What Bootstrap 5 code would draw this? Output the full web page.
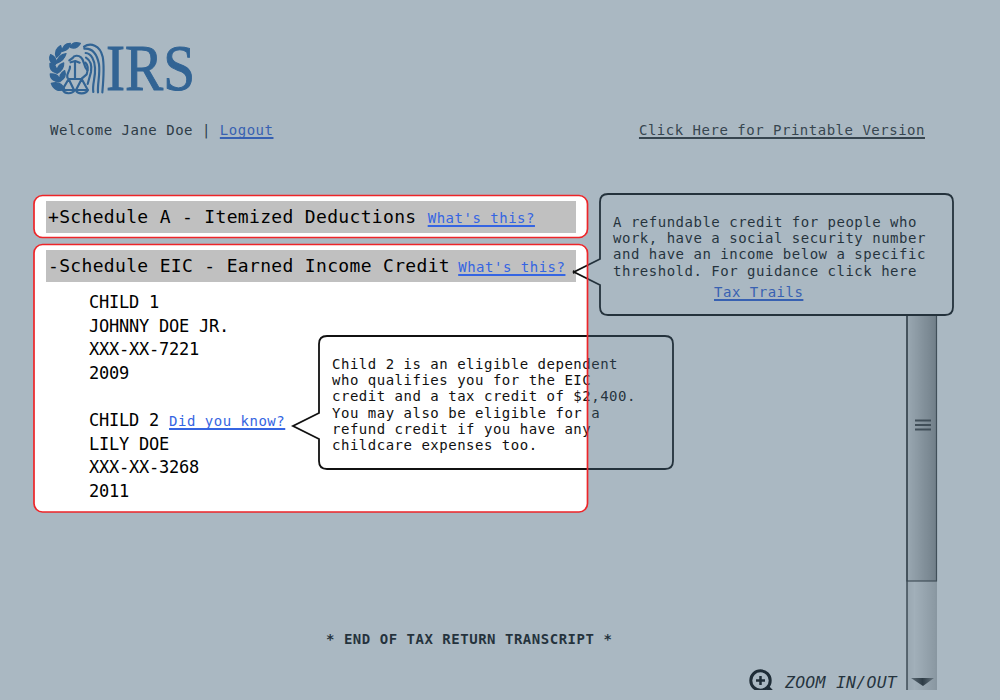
<!DOCTYPE html>
<html lang="en">
<head>
<meta charset="utf-8">
<meta name="viewport" content="width=device-width, initial-scale=1">
<title>IRS Tax Return Transcript</title>
<link href="https://cdn.jsdelivr.net/npm/bootstrap@5.3.0/dist/css/bootstrap.min.css" rel="stylesheet">
<style>
  body { width: 1000px; height: 700px; font: 14px/16px "DejaVu Sans Mono", monospace; color: #111; background: #fff; letter-spacing: .51px; }
  .shell { height: 690px; }
  a { color: #3565e2; text-decoration-thickness: 1.5px; text-underline-offset: 2px; text-decoration-skip-ink: none; }
  a:hover { color: #1d46b5; }
  .topbar { padding: 122px 75px 0 50px; color: #222; }
  .topbar .print-link { color: #333; }
  .brand-mark { left: 40px; top: 30px; }
  .schedules { padding: 63px 0 0 46px; width: 576px; }
  .sched-head { background: #c0c0c0; height: 32px; padding-left: 2px; font-size: 18px; line-height: 31px; letter-spacing: .33px; white-space: pre; color: #000; }
  .sched-head + .sched-head { margin-top: 17px; }
  .sched-head a { font-size: 14px; letter-spacing: .51px; }
  .sched-head .eic-link { margin-left: -3px; }
  .schedules { width: 576px; }
  .children { margin: 9px 0 0 43px; font-size: 17px; letter-spacing: -.23px; line-height: 23.6px; color: #000; }
  .children > div { height: 23.6px; }
  .children a { font-size: 14px; letter-spacing: .51px; }
  .callout svg { position: absolute; left: 0; top: 0; overflow: visible; }
  .callout p { position: relative; margin: 0; line-height: 16.2px; white-space: pre; }
  .callout .trail { padding: 5px 0 0 101px; }
  .callout-eic { left: 573px; top: 192px; width: 382px; height: 125px; padding: 22px 0 0 40px; }
  .callout-child { left: 292px; top: 334px; width: 382px; height: 137px; padding: 22px 0 0 40px; }
  .scroller { left: 906px; top: 300px; width: 32px; height: 390px; }
  .end-line { left: 326px; top: 631px; font-weight: 700; letter-spacing: .52px; }
  .zoomer { left: 747px; top: 668px; height: 22px; }
  .zoomer span { font-size: 16.5px; font-style: italic; letter-spacing: .25px; line-height: 22px; padding: 4px 0 0 11px; height: 26px; }
  .dim { pointer-events: none; }
</style>
</head>
<body class="position-relative overflow-hidden m-0">
<main class="shell position-relative overflow-hidden">
  <svg class="brand-mark position-absolute" width="170" height="80" viewBox="0 0 510 240" role="img" aria-label="IRS">
    <g fill="#2969ad" stroke="#2969ad" stroke-width="4" stroke-linejoin="round">
      <path d="M121 40C107 36 95 40 91 52C104 57 115 50 121 40ZM91 40C76 40 68 50 67 64C80 60 90 52 91 40ZM62 47C48 55 44 68 49 82C61 74 68 62 62 47ZM32 74C25 86 31 98 44 107C53 93 47 80 32 74ZM78 71C63 73 53 82 49 100C66 95 73 87 78 71ZM30 100C28 117 35 126 51 129C52 112 44 103 30 100ZM71 99C54 105 49 115 51 130C66 122 72 113 71 99ZM31 132C31 147 42 156 60 155C58 138 49 130 31 132ZM74 122C60 130 57 140 62 153C75 144 78 133 74 122ZM34 160C40 178 55 186 74 178C66 160 51 155 34 160Z"/>
    </g>
    <g fill="none" stroke="#2969ad" stroke-width="6.5" stroke-linecap="round" stroke-linejoin="round">
      <path d="M88 91L98 84C102 76 115 75 123 82C134 91 130 109 142 121"/>
      <path d="M92 97L106 93L119 98M105 97V147M88 147H123M86 147L69 176M86 147L102 180M125 147L108 180M125 147L143 179M82 143C78 130 91 123 90 110M68 179C73 193 97 193 104 180H68ZM108 181C113 194 137 193 144 180H108Z"/>
      <path d="M132 50C151 37 180 45 188 80C194 111 190 153 187 187M133 56C156 54 171 72 177 103C181 134 172 160 174 187M137 69C154 70 164 91 165 114C167 144 156 162 160 186M138 83C151 91 156 108 153 126L143 162M136 98C145 106 145 118 140 133L126 145"/>
    </g>
    <text x="198" y="181" font-family="Liberation Serif, serif" font-size="198" letter-spacing="0" textLength="267" lengthAdjust="spacingAndGlyphs" fill="#2969ad" stroke="#2969ad" stroke-width="3">IRS</text>
  </svg>

  <header class="topbar d-flex justify-content-between">
    <div>Welcome Jane Doe | <a href="#">Logout</a></div>
    <a class="print-link" href="#">Click Here for Printable Version</a>
  </header>

  <section class="schedules d-flex flex-column">
    <div class="sched-head">+Schedule A - Itemized Deductions <a href="#">What's this?</a></div>
    <div class="sched-head">-Schedule EIC - Earned Income Credit <a class="eic-link" href="#">What's this?</a></div>
    <div class="children">
      <div>CHILD 1</div>
      <div>JOHNNY DOE JR.</div>
      <div>XXX-XX-7221</div>
      <div>2009</div>
      <div>&nbsp;</div>
      <div>CHILD 2 <a href="#">Did you know?</a></div>
      <div>LILY DOE</div>
      <div>XXX-XX-3268</div>
      <div>2011</div>
    </div>
  </section>

  <div class="scroller position-absolute">
    <svg class="d-block" width="32" height="390" aria-hidden="true">
      <defs>
        <linearGradient id="thumb"><stop stop-color="#e3e3e3"/><stop offset="1" stop-color="#999"/></linearGradient>
        <linearGradient id="track"><stop stop-color="#e1e1e1"/><stop offset=".25" stop-color="#f0f0f0"/><stop offset="1" stop-color="#c4c4c4"/></linearGradient>
        <linearGradient id="arrow"><stop stop-color="#777"/><stop offset=".5" stop-color="#222"/><stop offset="1" stop-color="#888"/></linearGradient>
      </defs>
      <rect x="1" y="281" width="30" height="109" fill="url(#track)"/>
      <rect x="1" y="0" width="29.5" height="281" fill="url(#thumb)" stroke="#444" stroke-width="1.2"/>
      <path d="M1 0V390" stroke="#333" stroke-width="1.4"/>
      <path d="M9 120.5H25M9 125H25M9 129.5H25" stroke="#444" stroke-width="1.8"/>
      <path d="M5 378H28L17 386Z" fill="url(#arrow)"/>
    </svg>
  </div>

  <aside class="callout callout-eic position-absolute">
    <svg width="382" height="125" aria-hidden="true"><path d="M35 2H372Q380 2 380 10V115Q380 123 372 123H35Q27 123 27 115V93L1 80L27 67V10Q27 2 35 2Z" fill="#fff"/><path d="M3.500 80L0 78V82Z" fill="#111"/><path d="M35 2H372Q380 2 380 10V115Q380 123 372 123H35Q27 123 27 115V93L1 80L27 67V10Q27 2 35 2Z" fill="none" stroke="#111" stroke-width="1.8"/></svg>
    <p>A refundable credit for people who
work, have a social security number
and have an income below a specific
threshold. For guidance click here</p>
    <p class="trail"><a href="#">Tax Trails</a></p>
  </aside>

  <aside class="callout callout-child position-absolute">
    <svg width="382" height="137" aria-hidden="true"><path d="M35 2H373Q381 2 381 10V127Q381 135 373 135H35Q27 135 27 127V105L1 92L27 79V10Q27 2 35 2Z" fill="#fff" stroke="#111" stroke-width="1.8"/></svg>
    <p>Child 2 is an eligible dependent
who qualifies you for the EIC
credit and a tax credit of $2,400.
You may also be eligible for a
refund credit if you have any
childcare expenses too.</p>
  </aside>

  <div class="end-line position-absolute text-nowrap">* END OF TAX RETURN TRANSCRIPT *</div>
  <div class="zoomer position-absolute d-flex text-nowrap">
    <svg width="27" height="26" aria-hidden="true" fill="none" stroke="#080808"><circle cx="13.5" cy="12.5" r="9.7" stroke-width="3"/><path d="M13.5 8V17M9 12.5H18" stroke-width="2.5"/><path d="M20 19L25 24" stroke-width="4"/></svg>
    <span>ZOOM IN/OUT</span>
  </div>
</main>

<!-- Spotlight: dims the page except for the two schedule panels -->
<svg class="dim position-absolute top-0 start-0" width="1000" height="700" aria-hidden="true">
  <path fill="#3d5d74" fill-opacity=".44" fill-rule="evenodd" d="M0 0H1000V700H0ZM43 195.500H579Q587.500 195.500 587.500 204V229Q587.500 237.500 579 237.500H43Q34 237.500 34 229V204Q34 195.500 43 195.500ZM43 244.500H579Q587.500 244.500 587.500 253V503Q587.500 512 579 512H43Q34 512 34 503V253Q34 244.500 43 244.500Z"/>
  <g fill="none" stroke="#ed2529" stroke-width="1.7"><rect x="34" y="195.500" width="553.500" height="42" rx="8.500"/><rect x="34" y="244.500" width="553.500" height="267.500" rx="8.500"/></g>
</svg>
<script src="https://cdn.jsdelivr.net/npm/bootstrap@5.3.0/dist/js/bootstrap.bundle.min.js"></script>
</body>
</html>
